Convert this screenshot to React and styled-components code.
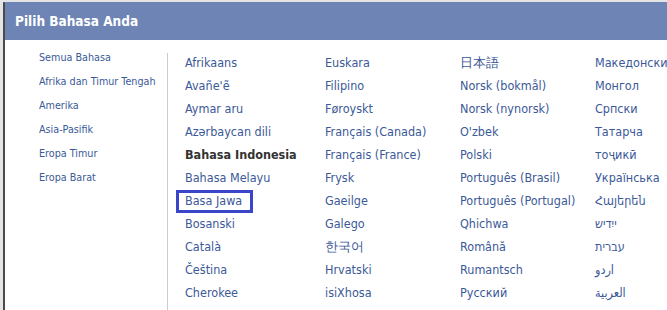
import styled, { createGlobalStyle } from "styled-components";

const GlobalStyle = createGlobalStyle`
  body {
    margin: 0;
    background: #fff;
    font-family: "DejaVu Sans Condensed", "DejaVu Sans", Tahoma, sans-serif;
  }
`;

const regions = [
  "Semua Bahasa",
  "Afrika dan Timur Tengah",
  "Amerika",
  "Asia-Pasifik",
  "Eropa Timur",
  "Eropa Barat",
];

const columns = [
  [
    "Afrikaans",
    "Avañe'ẽ",
    "Aymar aru",
    "Azərbaycan dili",
    "Bahasa Indonesia",
    "Bahasa Melayu",
    "Basa Jawa",
    "Bosanski",
    "Català",
    "Čeština",
    "Cherokee",
  ],
  [
    "Euskara",
    "Filipino",
    "Føroyskt",
    "Français (Canada)",
    "Français (France)",
    "Frysk",
    "Gaeilge",
    "Galego",
    "한국어",
    "Hrvatski",
    "isiXhosa",
  ],
  [
    "日本語",
    "Norsk (bokmål)",
    "Norsk (nynorsk)",
    "O'zbek",
    "Polski",
    "Português (Brasil)",
    "Português (Portugal)",
    "Qhichwa",
    "Română",
    "Rumantsch",
    "Русский",
  ],
  [
    "Македонски",
    "Монгол",
    "Српски",
    "Татарча",
    "тоҷикӣ",
    "Українська",
    "Հայերեն",
    "ייִדיש",
    "עברית",
    "اردو",
    "العربية",
  ],
];

const current = "Bahasa Indonesia";
const focused = "Basa Jawa";

const Page = styled.div`
  width: 667px;
  height: 310px;
  overflow: hidden;
  background: #e4e4e4;
  padding: 2px 0 0 3px;
  box-sizing: border-box;
`;

const Dialog = styled.div`
  height: 100%;
  background: #fff;
  border-left: 2px solid #4a4a4a;
  border-top: 1px solid #5a6f9c;
`;

const Header = styled.div`
  height: 38px;
  background: #6d84b4;
  color: #fff;
  font-weight: bold;
  font-size: 13.5px;
  display: flex;
  align-items: center;
  padding-left: 10px;
  margin-top: -1px;
`;

const Body = styled.div`
  display: flex;
  align-items: flex-start;
  padding-top: 6px;
`;

const Sidebar = styled.ul`
  list-style: none;
  margin: 0;
  padding: 0 0 0 34px;
  width: 162px;
  box-sizing: border-box;
  flex-shrink: 0;
`;

const RegionItem = styled.li`
  height: 24px;
  line-height: 24px;
  font-size: 10.7px;
  color: #3b5998;
  white-space: nowrap;
`;

const Divider = styled.div`
  width: 1px;
  flex-shrink: 0;
  background: #cccccc;
  margin-top: 7px;
  height: 270px;
`;

const Grid = styled.div`
  display: grid;
  grid-template-columns: 140px 135px 135px 120px;
  padding: 5px 0 0 17px;
`;

const Column = styled.ul`
  list-style: none;
  margin: 0;
  padding: 0;
`;

const LangItem = styled.li`
  position: relative;
  height: 23px;
  line-height: 23px;
  font-size: 12.5px;
  white-space: nowrap;
  color: ${(p) => (p.$current ? "#333" : "#3b5998")};
  font-weight: ${(p) => (p.$current ? "bold" : "normal")};

  ${(p) =>
    p.$focused &&
    `
    &::after {
      content: "";
      position: absolute;
      left: -9px;
      top: 1px;
      width: 71px;
      height: 17px;
      border: 3px solid #3a45c9;
    }
  `}
`;

export default function App() {
  return (
    <Page>
      <GlobalStyle />
      <Dialog>
        <Header>Pilih Bahasa Anda</Header>
        <Body>
          <Sidebar>
            {regions.map((r) => (
              <RegionItem key={r}>{r}</RegionItem>
            ))}
          </Sidebar>
          <Divider />
          <Grid>
            {columns.map((col, i) => (
              <Column key={i}>
                {col.map((lang) => (
                  <LangItem
                    key={lang}
                    $current={lang === current}
                    $focused={lang === focused}
                  >
                    {lang}
                  </LangItem>
                ))}
              </Column>
            ))}
          </Grid>
        </Body>
      </Dialog>
    </Page>
  );
}
